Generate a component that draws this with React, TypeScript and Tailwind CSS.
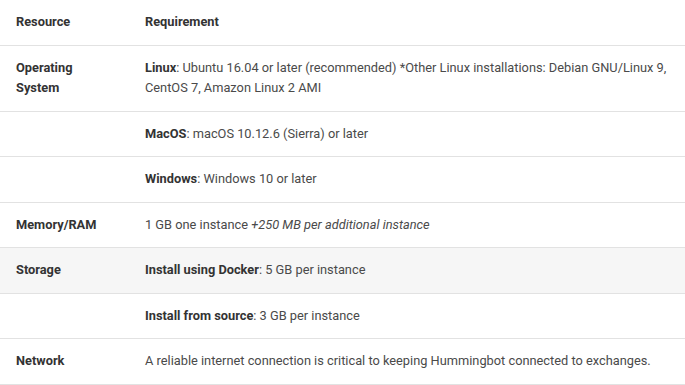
import React from 'react';

type Row = {
  resource?: string;
  label?: string;
  text: React.ReactNode;
  shaded?: boolean;
};

const rows: Row[] = [
  {
    resource: 'Operating System',
    label: 'Linux',
    text: 'Ubuntu 16.04 or later (recommended) *Other Linux installations: Debian GNU/Linux 9, CentOS 7, Amazon Linux 2 AMI',
  },
  { label: 'MacOS', text: 'macOS 10.12.6 (Sierra) or later' },
  { label: 'Windows', text: 'Windows 10 or later' },
  {
    resource: 'Memory/RAM',
    text: (
      <>
        1 GB one instance <em>+250 MB per additional instance</em>
      </>
    ),
  },
  { resource: 'Storage', label: 'Install using Docker', text: '5 GB per instance', shaded: true },
  { label: 'Install from source', text: '3 GB per instance' },
  {
    resource: 'Network',
    text: 'A reliable internet connection is critical to keeping Hummingbot connected to exchanges.',
  },
];

const App: React.FC = () => {
  return (
    <div className="w-[685px] h-[385px] overflow-hidden bg-white" style={{ fontFamily: 'Roboto, "Liberation Sans", sans-serif' }}>
      <table className="w-full border-collapse text-[12.8px] leading-[20.5px] text-[#4a4a4a]">
        <colgroup>
          <col className="w-[129px]" />
          <col />
        </colgroup>
        <thead>
          <tr className="border-b border-[#e2e2e2]">
            <th className="px-4 py-3 text-left font-bold text-[#333]">Resource</th>
            <th className="px-4 py-3 text-left font-bold text-[#333]">Requirement</th>
          </tr>
        </thead>
        <tbody>
          {rows.map((row, i) => (
            <tr key={i} className={`border-b border-[#e2e2e2] ${row.shaded ? 'bg-[#f6f6f6]' : ''}`}>
              <td className="px-4 py-3 align-top font-bold text-[#333]">{row.resource}</td>
              <td className="px-4 py-3 align-top">
                {row.label && <strong className="font-bold text-[#333]">{row.label}</strong>}
                {row.label && ': '}
                {row.text}
              </td>
            </tr>
          ))}
        </tbody>
      </table>
    </div>
  );
};

export default App;
